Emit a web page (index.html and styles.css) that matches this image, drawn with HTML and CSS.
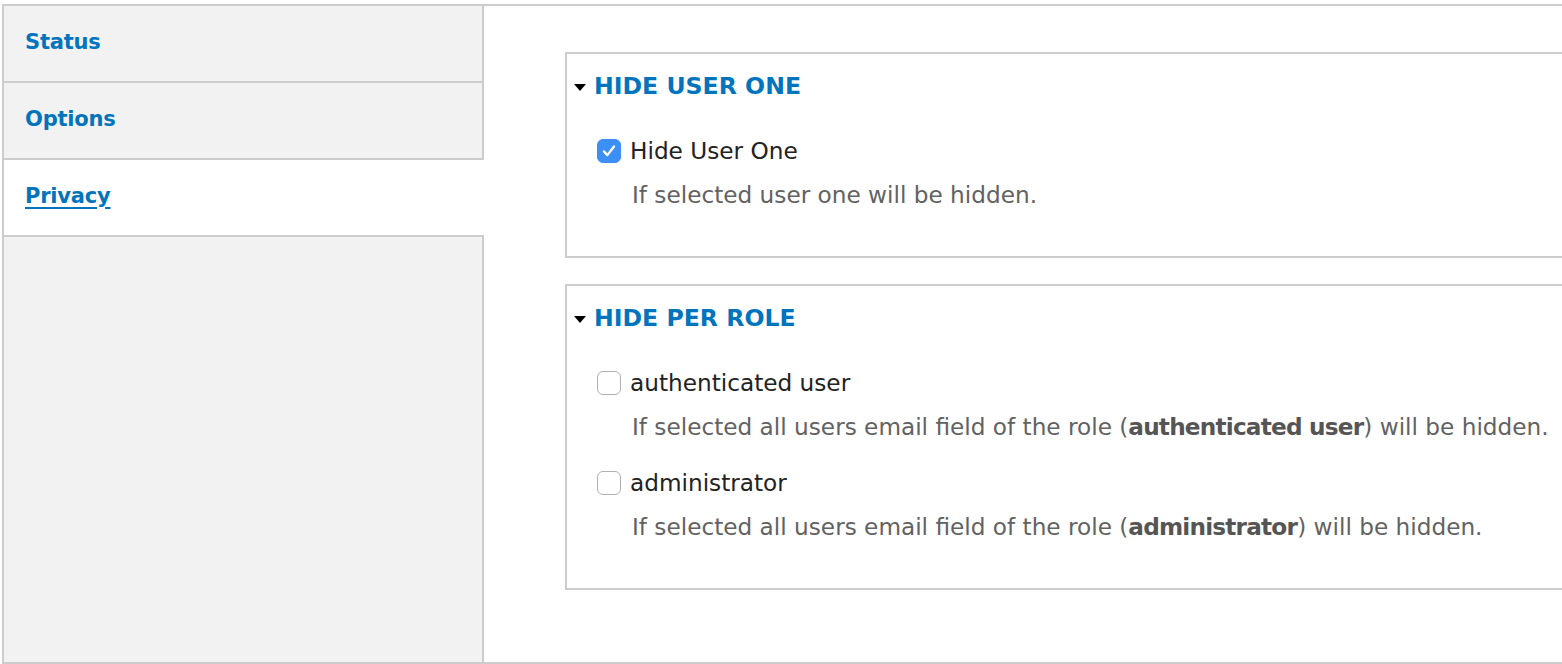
FILE: index.html
```html
<!DOCTYPE html>
<html>
<head>
<meta charset="utf-8">
<link rel="stylesheet" href="styles.css">
</head>
<body>
<div class="vtabs">
  <ul class="vtabs-menu">
    <li class="vtab"><a href="#">Status</a></li>
    <li class="vtab"><a href="#">Options</a></li>
    <li class="vtab is-active"><a href="#">Privacy</a></li>
  </ul>
  <div class="vtabs-panes">
    <div class="fieldset">
      <div class="summary"><span class="caret"></span>HIDE USER ONE</div>
      <div class="form-item">
        <div class="option"><span class="cb is-checked"><svg viewBox="0 0 24 24" width="24" height="24"><path d="M6.5 12.5 L10.2 16.5 L17.5 7" fill="none" stroke="#fff" stroke-width="2.6" stroke-linecap="round" stroke-linejoin="round"/></svg></span><span class="label">Hide User One</span></div>
        <div class="description">If selected user one will be hidden.</div>
      </div>
    </div>
    <div class="fieldset">
      <div class="summary"><span class="caret"></span>HIDE PER ROLE</div>
      <div class="form-item">
        <div class="option"><span class="cb"></span><span class="label">authenticated user</span></div>
        <div class="description">If selected all users email field of the role (<strong>authenticated user</strong>) will be hidden.</div>
      </div>
      <div class="form-item">
        <div class="option"><span class="cb"></span><span class="label">administrator</span></div>
        <div class="description">If selected all users email field of the role (<strong>administrator</strong>) will be hidden.</div>
      </div>
    </div>
  </div>
</div>
</body>
</html>
```

FILE: styles.css
```css
html, body {
  margin: 0;
  padding: 0;
  overflow: hidden;
  background: #fff;
}
body {
  font-family: "DejaVu Sans", "Liberation Sans", sans-serif;
  font-size: 23.2px;
  line-height: 32px;
  color: #333;
}
.vtabs {
  margin: 4px 0 0 2px;
  height: 656px;
  border: 2px solid #ccc;
  border-right: none;
  display: flex;
  box-sizing: content-box;
}
.vtabs-menu {
  list-style: none;
  margin: 0;
  padding: 0;
  width: 478px;
  flex: none;
  background: #f2f2f2;
  border-right: 2px solid #ccc;
}
.vtab {
  border-bottom: 2px solid #ccc;
  display: flex;
  align-items: center;
  padding: 0 0 4px 21px;
  box-sizing: border-box;
  height: 77px;
}
.vtab a {
  font-weight: bold;
  font-size: 21px;
  letter-spacing: -0.2px;
  color: #0074bd;
  text-decoration: none;
}
.vtab.is-active {
  background: #fff;
  margin-right: -2px;
  position: relative;
}
.vtab.is-active a {
  text-decoration: underline;
  text-decoration-thickness: 2px;
  text-underline-offset: 4px;
}
.vtabs-panes {
  flex: 1;
  padding: 46px 0 0 81px;
}
.fieldset {
  border: 2px solid #ccc;
  border-right: none;
  padding: 16px 0 45px 7px;
  margin-bottom: 26px;
}
.fieldset + .fieldset {
  padding-top: 16px;
}
.summary {
  font-weight: bold;
  font-size: 23.6px;
  color: #0074bd;
  display: flex;
  align-items: center;
  margin-bottom: 33px;
}
.caret {
  width: 0;
  height: 0;
  border-left: 6.5px solid transparent;
  border-right: 6.5px solid transparent;
  border-top: 7px solid #000;
  margin: 2px 8px 0 0;
}
.form-item + .form-item {
  margin-top: 24px;
}
.option {
  display: flex;
  align-items: center;
  padding-left: 23px;
}
.cb {
  width: 24px;
  height: 24px;
  border: 1px solid #b0b0b0;
  border-radius: 6px;
  background: #fff;
  box-sizing: border-box;
  margin-right: 9px;
  flex: none;
  display: flex;
  align-items: center;
  justify-content: center;
}
.cb.is-checked {
  background: #3b8ff6;
  border-color: #3b8ff6;
}
.cb svg {
  width: 22px;
  height: 22px;
}
.label {
  color: #222;
}
.description {
  margin-top: 12px;
  padding-left: 58px;
  color: #626262;
}
.description strong {
  color: #555;
  letter-spacing: -0.8px;
}
```
